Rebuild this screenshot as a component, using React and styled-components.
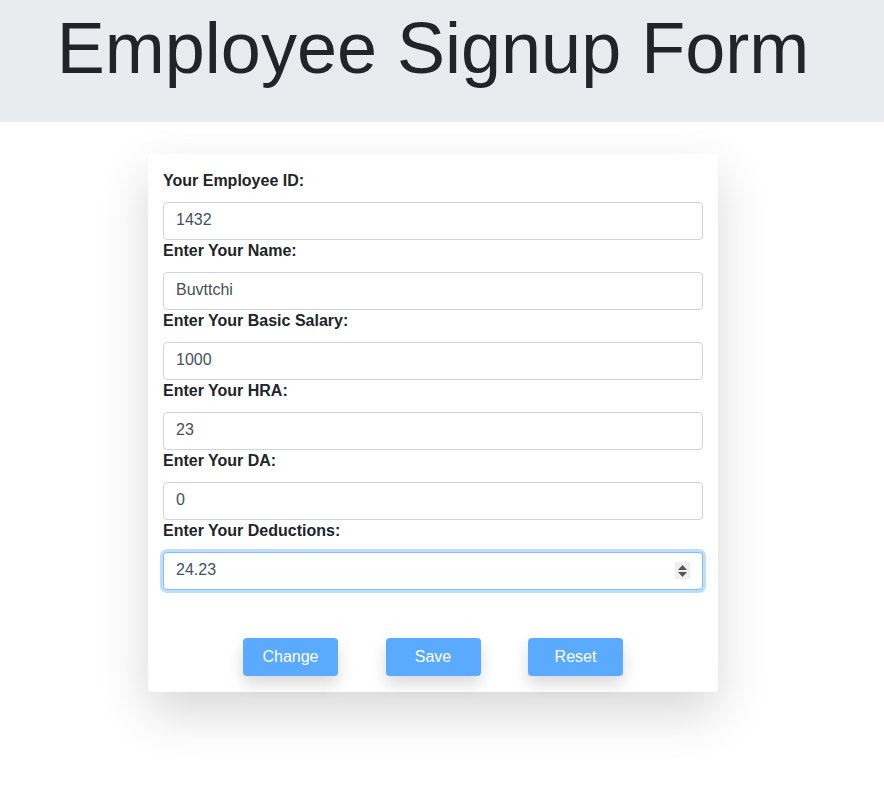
import styled, { createGlobalStyle } from 'styled-components';

const GlobalStyle = createGlobalStyle`
  body {
    margin: 0;
    font-family: 'Liberation Sans', Arial, sans-serif;
    color: #212529;
    background: #fff;
  }
`;

const Header = styled.header`
  background-color: #e9ecef;
  height: 122px;
  display: flex;
  justify-content: center;
  padding-right: 18px;
`;

const Title = styled.h1`
  margin: 5px 0 0;
  font-size: 72px;
  font-weight: 400;
  line-height: 1.2;
  color: #212529;
`;

const Main = styled.main`
  display: flex;
  justify-content: center;
  padding: 32px 18px 80px 0;
`;

const Card = styled.form`
  width: 540px;
  padding: 16px 15px;
  background: #fff;
  border-radius: 4px;
  box-shadow: 0 20px 50px rgba(0, 0, 0, 0.16);
`;

const Group = styled.div`
  display: flex;
  flex-direction: column;
`;

const Label = styled.label`
  font-size: 16px;
  font-weight: 700;
  line-height: 24px;
  margin-bottom: 8px;
  transform: translateY(-1px);
`;

const InputWrap = styled.div`
  position: relative;
`;

const Input = styled.input`
  box-sizing: border-box;
  width: 100%;
  height: 38px;
  padding: 5px 12px 7px;
  font-family: 'Liberation Sans', Arial, sans-serif;
  font-size: 16px;
  color: #495057;
  background: #fff;
  border: 1px solid ${(p) => (p.$focused ? '#80bdff' : '#ced4da')};
  border-radius: 4px;
  outline: none;
  box-shadow: ${(p) => (p.$focused ? '0 0 0 3px rgba(0, 123, 255, 0.25)' : 'none')};
`;

const Spinner = styled.span`
  position: absolute;
  right: 13px;
  top: 10px;
  width: 15px;
  height: 17px;
  background: #efefef;
  display: flex;
  flex-direction: column;
  align-items: center;
  justify-content: center;
  gap: 2px;
`;

const Buttons = styled.div`
  display: flex;
  justify-content: center;
  gap: 47.5px;
  margin-top: 48px;
`;

const Button = styled.button`
  width: 95px;
  height: 38px;
  border: none;
  border-radius: 4px;
  background: #5aaaff;
  color: #fff;
  font-family: 'Liberation Sans', Arial, sans-serif;
  font-size: 16px;
  box-shadow: 0 8px 16px rgba(0, 0, 0, 0.15);
  cursor: pointer;
`;

const fields = [
  { label: 'Your Employee ID:', value: '1432' },
  { label: 'Enter Your Name:', value: 'Buvttchi' },
  { label: 'Enter Your Basic Salary:', value: '1000' },
  { label: 'Enter Your HRA:', value: '23' },
  { label: 'Enter Your DA:', value: '0' },
  { label: 'Enter Your Deductions:', value: '24.23', focused: true },
];

function SpinIcon() {
  return (
    <Spinner>
      <svg width="9" height="5" viewBox="0 0 9 5">
        <path d="M4.5 0 L9 5 L0 5 Z" fill="#555" />
      </svg>
      <svg width="9" height="5" viewBox="0 0 9 5">
        <path d="M0 0 L9 0 L4.5 5 Z" fill="#555" />
      </svg>
    </Spinner>
  );
}

export default function App() {
  return (
    <>
      <GlobalStyle />
      <Header>
        <Title>Employee Signup Form</Title>
      </Header>
      <Main>
        <Card onSubmit={(e) => e.preventDefault()}>
          {fields.map((f) => (
            <Group key={f.label}>
              <Label>{f.label}</Label>
              <InputWrap>
                <Input defaultValue={f.value} $focused={f.focused} />
                {f.focused && <SpinIcon />}
              </InputWrap>
            </Group>
          ))}
          <Buttons>
            <Button type="button">Change</Button>
            <Button type="button">Save</Button>
            <Button type="reset">Reset</Button>
          </Buttons>
        </Card>
      </Main>
    </>
  );
}
